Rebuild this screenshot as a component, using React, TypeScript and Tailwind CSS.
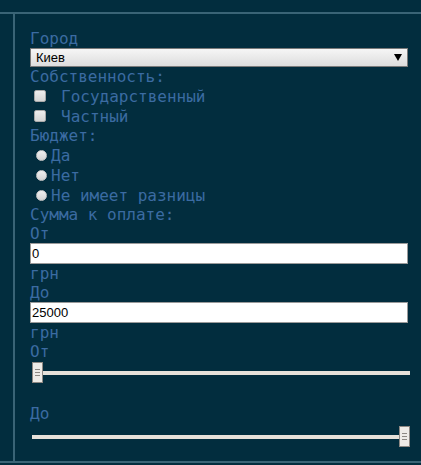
import { useState } from "react";

const label = "block h-[19px] leading-[19px] text-[16px] text-[#3b6ba2] whitespace-pre";
const mono = { fontFamily: '"DejaVu Sans Mono", monospace' };

function Thumb() {
  return (
    <div className="w-[11px] h-[21px] bg-[#eeebe7] border border-[#8d8883] flex flex-col items-center justify-center gap-[2px]">
      <div className="w-[5px] h-px bg-[#8d8883]" />
      <div className="w-[5px] h-px bg-[#8d8883]" />
      <div className="w-[5px] h-px bg-[#8d8883]" />
    </div>
  );
}

export default function App() {
  const [from, setFrom] = useState("0");
  const [to, setTo] = useState("25000");

  return (
    <div className="h-[465px] w-[421px] bg-[#022d3e] overflow-hidden" style={mono}>
      <div className="h-[12px]" />
      <div className="h-[451px] border-t-2 border-b-2 border-[#3a6476] pl-[13px]">
        <div className="h-full border-l-2 border-[#3a6476] pl-[15px] pr-[13px] pt-[15px] flex flex-col">
          <span className={label}>Город</span>
          <div className="relative h-[19px] border border-[#7a7a7a] bg-gradient-to-b from-[#f6f6f6] to-[#dddddd]">
            <span
              className="absolute left-[5px] top-0 leading-[17px] text-[13px] text-black"
              style={{ fontFamily: '"Liberation Sans", Arial, sans-serif' }}
            >
              Киев
            </span>
            <span className="absolute right-[5px] top-[5px] w-0 h-0 border-l-[4px] border-r-[4px] border-t-[7px] border-l-transparent border-r-transparent border-t-black" />
          </div>
          <span className={label}>Собственность:</span>
          {["Государственный", "Частный"].map((t) => (
            <div key={t} className="h-[20px] flex items-center">
              <span className="ml-[4px] w-[12px] h-[12px] rounded-[2px] border border-[#a9a9a9] bg-gradient-to-b from-[#eeeeee] to-[#d6d6d6]" />
              <span className="ml-[15px] text-[16px] leading-[19px] text-[#3b6ba2]">{t}</span>
            </div>
          ))}
          <span className={label}>Бюджет:</span>
          {["Да", "Нет", "Не имеет разницы"].map((t) => (
            <div key={t} className="h-[20px] flex items-center">
              <span className="ml-[6px] w-[11px] h-[11px] rounded-full bg-gradient-to-b from-[#f0f0f0] to-[#d4d4d4] border border-[#c6c6c6]" />
              <span className="ml-[4px] text-[16px] leading-[19px] text-[#3b6ba2] whitespace-pre">{t}</span>
            </div>
          ))}
          <span className={label}>Сумма к оплате:</span>
          <span className={label}>От</span>
          <input
            value={from}
            onChange={(e) => setFrom(e.target.value)}
            className="h-[21px] w-full bg-white border border-[#9a9a9a] px-[1px] text-[13px] text-black outline-none"
            style={{ fontFamily: '"Liberation Sans", Arial, sans-serif' }}
          />
          <span className={label}>грн</span>
          <span className={label}>До</span>
          <input
            value={to}
            onChange={(e) => setTo(e.target.value)}
            className="h-[21px] w-full bg-white border border-[#9a9a9a] px-[1px] text-[13px] text-black outline-none"
            style={{ fontFamily: '"Liberation Sans", Arial, sans-serif' }}
          />
          <span className={label}>грн</span>
          <span className={label}>От</span>
          <div className="mt-[1px] h-[21px] flex items-center mr-[-2px] ml-[2px]">
            <Thumb />
            <div className="flex-1 h-[4px] bg-[#e6e1da]" />
          </div>
          <div className="h-[21px]" />
          <span className={label}>До</span>
          <div className="mt-[3px] h-[21px] flex items-center mr-[-2px] ml-[2px]">
            <div className="flex-1 h-[4px] bg-[#e6e1da]" />
            <Thumb />
          </div>
        </div>
      </div>
    </div>
  );
}
